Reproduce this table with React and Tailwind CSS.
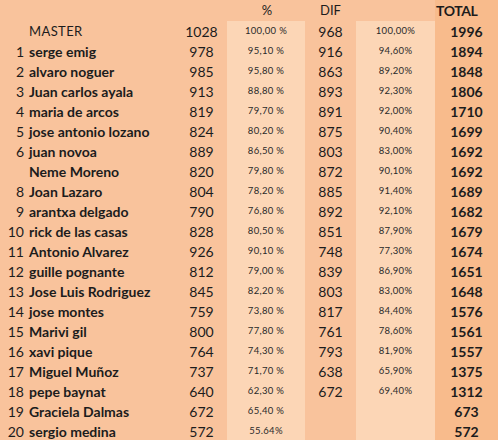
import React from 'react';

const rows = [
  ['1', 'serge emig', 978, '95,10 %', 916, '94,60%', 1894],
  ['2', 'alvaro noguer', 985, '95,80 %', 863, '89,20%', 1848],
  ['3', 'Juan carlos ayala', 913, '88,80 %', 893, '92,30%', 1806],
  ['4', 'maria de arcos', 819, '79,70 %', 891, '92,00%', 1710],
  ['5', 'jose antonio lozano', 824, '80,20 %', 875, '90,40%', 1699],
  ['6', 'juan novoa', 889, '86,50 %', 803, '83,00%', 1692],
  ['', 'Neme Moreno', 820, '79,80 %', 872, '90,10%', 1692],
  ['8', 'Joan Lazaro', 804, '78,20 %', 885, '91,40%', 1689],
  ['9', 'arantxa delgado', 790, '76,80 %', 892, '92,10%', 1682],
  ['10', 'rick de las casas', 828, '80,50 %', 851, '87,90%', 1679],
  ['11', 'Antonio Alvarez', 926, '90,10 %', 748, '77,30%', 1674],
  ['12', 'guille pognante', 812, '79,00 %', 839, '86,90%', 1651],
  ['13', 'Jose Luis Rodriguez', 845, '82,20 %', 803, '83,00%', 1648],
  ['14', 'jose montes', 759, '73,80 %', 817, '84,40%', 1576],
  ['15', 'Marivi gil', 800, '77,80 %', 761, '78,60%', 1561],
  ['16', 'xavi pique', 764, '74,30 %', 793, '81,90%', 1557],
  ['17', 'Miguel Muñoz', 737, '71,70 %', 638, '65,90%', 1375],
  ['18', 'pepe baynat', 640, '62,30 %', 672, '69,40%', 1312],
  ['19', 'Graciela Dalmas', 672, '65,40 %', '', '', 673],
  ['20', 'sergio medina', 572, '55.64%', '', '', 572],
];

const grid = 'grid grid-cols-[26px_150px_51px_78px_51px_79px_63px]';

function Row({ rank, name, score, pct, dif, pct2, total, master }) {
  return (
    <div className={`${grid} h-[20px] items-stretch`}>
      <div className="flex items-center justify-end pr-[2px] text-[14px]">{rank}</div>
      <div className={`flex items-center pl-[3px] whitespace-nowrap ${master ? 'text-[13px] font-normal tracking-[0.4px]' : 'text-[14px] font-bold'}`}>
        {name}
      </div>
      <div className="flex items-center justify-center text-[14px]">{score}</div>
      <div className="flex items-center justify-center bg-[#fcd6b6] text-[9.5px] tracking-[0.3px] text-[#2a2a2a]">{pct}</div>
      <div className="flex items-center justify-center text-[14px]">{dif}</div>
      <div className="flex items-center justify-center bg-[#fcd6b6] text-[9.5px] tracking-[0.3px] text-[#2a2a2a]">{pct2}</div>
      <div className="flex items-center justify-center bg-[#f8bb8c] text-[14px] font-bold">{total}</div>
    </div>
  );
}

export default function App() {
  return (
    <div
      className="w-[498px] h-[440px] overflow-hidden bg-[#f9c39c] text-[#1c1c1c]"
      style={{ fontFamily: 'Lato, "Open Sans", sans-serif' }}
    >
      {/* header */}
      <div className={`${grid} h-[21px] items-center`}>
        <div />
        <div />
        <div />
        <div className="text-center text-[13px] pl-[2px]">%</div>
        <div className="text-center text-[13px]">DIF</div>
        <div />
        <div className="h-full flex items-center bg-[#f8bb8c] pl-[1px] text-[14px] font-bold tracking-[-0.4px]">TOTAL</div>
      </div>

      <Row master rank="" name="MASTER" score={1028} pct="100,00 %" dif={968} pct2="100,00%" total={1996} />
      {rows.map((r) => (
        <Row key={r[1]} rank={r[0]} name={r[1]} score={r[2]} pct={r[3]} dif={r[4]} pct2={r[5]} total={r[6]} />
      ))}
    </div>
  );
}
